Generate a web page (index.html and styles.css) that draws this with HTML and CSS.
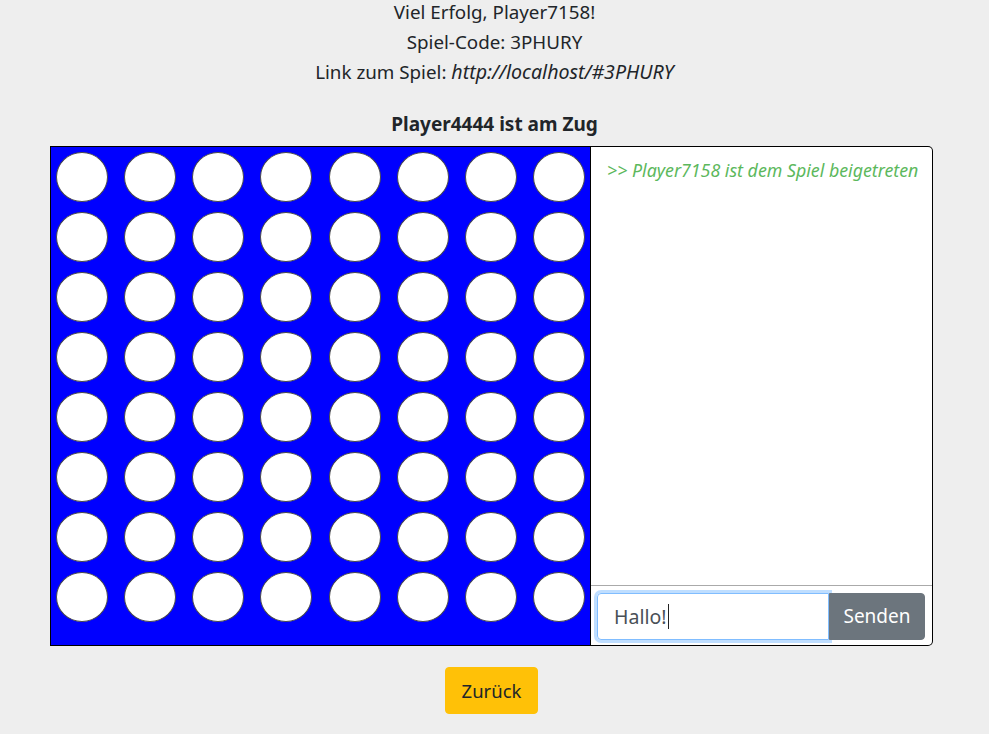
FILE: index.html
```html
<!DOCTYPE html>
<html lang="de">
<head>
<meta charset="utf-8">
<title>Vier gewinnt</title>
<link rel="stylesheet" href="styles.css">
</head>
<body>
<div class="info">
  <div>Viel Erfolg, Player7158!</div>
  <div>Spiel-Code: 3PHURY</div>
  <div>Link zum Spiel: <em>http://localhost/#3PHURY</em></div>
</div>
<div class="turn">Player4444 ist am Zug</div>
<div class="game">
  <div class="board">
    <div class="row"><span class="hole"></span><span class="hole"></span><span class="hole"></span><span class="hole"></span><span class="hole"></span><span class="hole"></span><span class="hole"></span><span class="hole"></span></div>
    <div class="row"><span class="hole"></span><span class="hole"></span><span class="hole"></span><span class="hole"></span><span class="hole"></span><span class="hole"></span><span class="hole"></span><span class="hole"></span></div>
    <div class="row"><span class="hole"></span><span class="hole"></span><span class="hole"></span><span class="hole"></span><span class="hole"></span><span class="hole"></span><span class="hole"></span><span class="hole"></span></div>
    <div class="row"><span class="hole"></span><span class="hole"></span><span class="hole"></span><span class="hole"></span><span class="hole"></span><span class="hole"></span><span class="hole"></span><span class="hole"></span></div>
    <div class="row"><span class="hole"></span><span class="hole"></span><span class="hole"></span><span class="hole"></span><span class="hole"></span><span class="hole"></span><span class="hole"></span><span class="hole"></span></div>
    <div class="row"><span class="hole"></span><span class="hole"></span><span class="hole"></span><span class="hole"></span><span class="hole"></span><span class="hole"></span><span class="hole"></span><span class="hole"></span></div>
    <div class="row"><span class="hole"></span><span class="hole"></span><span class="hole"></span><span class="hole"></span><span class="hole"></span><span class="hole"></span><span class="hole"></span><span class="hole"></span></div>
    <div class="row"><span class="hole"></span><span class="hole"></span><span class="hole"></span><span class="hole"></span><span class="hole"></span><span class="hole"></span><span class="hole"></span><span class="hole"></span></div>
  </div>
  <div class="chat">
    <div class="messages">
      <div class="msg">&gt;&gt; Player7158 ist dem Spiel beigetreten</div>
    </div>
    <div class="compose">
      <div class="input">Hallo!<span class="caret"></span></div>
      <button class="send">Senden</button>
    </div>
  </div>
</div>
<div class="actions">
  <button class="back">Zurück</button>
</div>
</body>
</html>
```
FILE: styles.css
```css
html, body {
  margin: 0;
  padding: 0;
}
body {
  background: #eeeeee;
  font-family: "Noto Sans", "Open Sans", sans-serif;
  color: #212529;
  font-size: 18px;
}
.info {
  text-align: center;
  font-size: 18.8px;
  line-height: 29.5px;
  margin-top: -2px;
}
.info em {
  font-style: italic;
  font-size: 19.6px;
}
.turn {
  text-align: center;
  font-weight: 700;
  font-size: 19px;
  line-height: 26px;
  margin-top: 23px;
  margin-bottom: 9px;
}
.game {
  display: flex;
  width: 883px;
  height: 500px;
  margin-left: 50px;
}
.board {
  box-sizing: border-box;
  width: 541px;
  height: 500px;
  border: 1px solid #000;
  background: #0000ff;
  padding: 5px 5px;
  display: flex;
  flex-direction: column;
  gap: 10px;
}
.row {
  display: flex;
  justify-content: space-between;
}
.hole {
  box-sizing: border-box;
  width: 52px;
  height: 50px;
  border-radius: 50%;
  background: #fff;
  border: 1px solid #4a4a4a;
}
.chat {
  box-sizing: border-box;
  width: 342px;
  height: 500px;
  border: 1px solid #000;
  border-left: none;
  border-radius: 0 5px 5px 0;
  background: #fff;
  display: flex;
  flex-direction: column;
}
.messages {
  flex: 1;
  padding: 11px 14px 11px 16px;
  border-bottom: 1px solid #aaaaaa;
}
.msg {
  color: #5cb85c;
  font-style: italic;
  font-size: 17.8px;
  line-height: 24px;
  white-space: nowrap;
}
.compose {
  display: flex;
  padding: 7px 5px 5px 6px;
}
.input {
  box-sizing: border-box;
  width: 232px;
  height: 47px;
  border: 1px solid #80bdff;
  border-radius: 4px 0 0 4px;
  box-shadow: 0 0 0 3px rgba(0, 123, 255, 0.25);
  padding: 0 16px;
  font-size: 19.5px;
  line-height: 45px;
  color: #495057;
  display: flex;
  align-items: center;
}
.caret {
  display: inline-block;
  width: 1px;
  height: 25px;
  background: #222;
  margin-left: 1px;
}
.send {
  box-sizing: border-box;
  width: 96px;
  height: 47px;
  border: 1px solid #6c757d;
  background: #6c757d;
  color: #fff;
  font-family: inherit;
  font-size: 19px;
  border-radius: 0 4px 4px 0;
  padding: 0;
}
.actions {
  display: flex;
  justify-content: center;
  padding-top: 21px;
  padding-right: 6px;
}
.back {
  box-sizing: border-box;
  width: 93px;
  height: 47px;
  border: 1px solid #ffc107;
  background: #ffc107;
  color: #212529;
  font-family: inherit;
  font-size: 18.5px;
  border-radius: 4px;
  padding: 0;
}
```
